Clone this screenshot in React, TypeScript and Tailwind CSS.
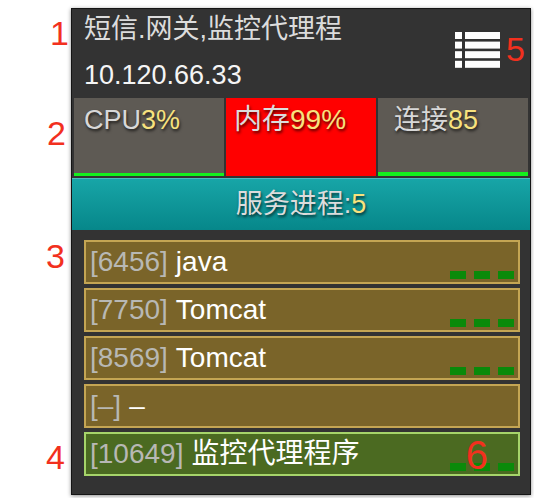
import React from 'react';

type Proc = { pid: string; name: string; ok: boolean; agent?: boolean };

const PROCS: Proc[] = [
  { pid: '6456', name: 'java', ok: true },
  { pid: '7750', name: 'Tomcat', ok: true },
  { pid: '8569', name: 'Tomcat', ok: true },
  { pid: '–', name: '–', ok: false },
  { pid: '10649', name: '监控代理程序', ok: true, agent: true },
];

const FONT = "font-['Liberation_Sans','Noto_Sans_CJK_SC',sans-serif]";

const ListIcon = () => (
  <svg width="45" height="36" viewBox="0 0 45 36" fill="#fff">
    {[0, 9.6, 19.2, 28.8].map((y) => (
      <g key={y}>
        <rect x="0" y={y} width="7" height="7" />
        <rect x="10" y={y} width="35" height="7" />
      </g>
    ))}
  </svg>
);

const Mark = ({ n, className }: { n: string; className: string }) => (
  <span className={`absolute z-10 leading-none text-[#f2301e] ${className}`}>{n}</span>
);

const Dashes = () => (
  <div className="absolute right-[4px] bottom-[3px] flex gap-[8px]">
    <span className="block w-[16px] h-[8px] bg-[#0a8a0a]" />
    <span className="block w-[16px] h-[8px] bg-[#0a8a0a]" />
    <span className="block w-[16px] h-[8px] bg-[#0a8a0a]" />
  </div>
);

const shadow = '[text-shadow:1px_2px_3px_rgba(0,0,0,0.7)]';

export default function App() {
  return (
    <div className={`relative w-[534px] h-[498px] bg-white ${FONT}`}>
      <Mark n="1" className="text-[34px] left-[50px] top-[16px]" />
      <Mark n="2" className="text-[34px] left-[47px] top-[116px]" />
      <Mark n="3" className="text-[34px] left-[46px] top-[239px]" />
      <Mark n="4" className="text-[34px] left-[46px] top-[440px]" />
      <Mark n="5" className="text-[34px] left-[506px] top-[32px]" />

      <div className="absolute left-[71px] top-[8px] w-[460px] bg-[#333333] border border-[#151515] shadow-[0_1px_4px_rgba(0,0,0,0.45)]">
        {/* header */}
        <div className="flex justify-between h-[89px]">
          <div className="pl-[12px]">
            <div className="h-[40px] leading-[40px] text-[27px] text-[#dcdcdc]">短信.网关,监控代理程</div>
            <div className="mt-[6px] h-[40px] leading-[40px] text-[27px] text-[#f5f5f5]">10.120.66.33</div>
          </div>
          <div className="mt-[23px] mr-[30px]">
            <ListIcon />
          </div>
        </div>

        {/* stats */}
        <div className={`grid grid-cols-3 gap-[2px] px-[2px] h-[78px] text-[27px] ${shadow}`}>
          <div className="flex flex-col bg-[#5e5a54]">
            <div className="flex-1 pl-[10px] pt-[4px] leading-[36px]">
              <span className="text-[#d8d8d8]">CPU</span>
              <span className="text-[#f7e27e]">3%</span>
            </div>
            <div className="h-[3px] bg-[#14f01e]" />
          </div>
          <div className="flex flex-col bg-[#ff0000]">
            <div className="flex-1 pl-[8px] pt-[4px] leading-[36px] text-[28px]">
              <span className="text-[#dcdcdc]">内存</span>
              <span className="text-[#f7e27e]">99%</span>
            </div>
          </div>
          <div className="flex flex-col bg-[#5e5a54]">
            <div className="flex-1 pl-[16px] pt-[4px] leading-[36px]">
              <span className="text-[#d8d8d8]">连接</span>
              <span className="text-[#f7e27e]">85</span>
            </div>
            <div className="h-[4px] bg-[#14f01e]" />
          </div>
        </div>

        {/* services bar */}
        <div
          className={`mt-[2px] h-[52px] flex items-center justify-center text-[27px] border-t border-[#4cbcbd] bg-gradient-to-b from-[#17a5a7] to-[#06878a] ${shadow}`}
        >
          <span className="text-[#dcdcdc]">服务进程:</span>
          <span className="text-[#f7e27e]">5</span>
        </div>

        {/* processes */}
        <div className="flex flex-col gap-[4px] pl-[12px] pr-[10px] pt-[10px] pb-[18px]">
          {PROCS.map((p, i) => (
            <div
              key={i}
              className={`relative h-[44px] flex items-center pl-[4px] border-2 text-[28px] ${
                p.agent ? 'bg-[#4b6a21] border-[#a6d46a]' : 'bg-[#7a6429] border-[#c4a553]'
              }`}
            >
              <span className="text-[#b8b8b4]">[{p.pid}]</span>
              <span className="ml-[8px] text-white">{p.name}</span>
              {p.ok && <Dashes />}
              {p.agent && <Mark n="6" className="text-[40px] right-[30px] top-[1px]" />}
            </div>
          ))}
        </div>
      </div>
    </div>
  );
}
